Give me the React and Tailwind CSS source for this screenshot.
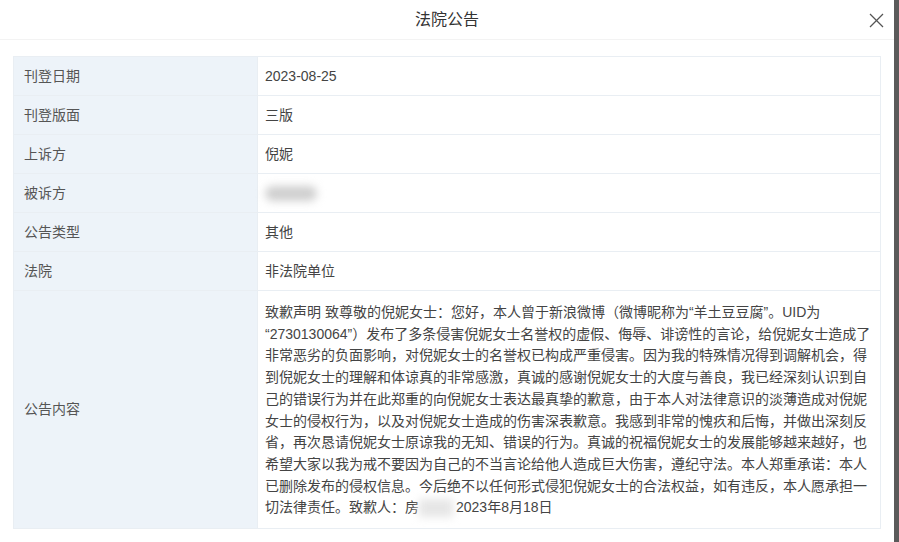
export default function App() {
  const rows = [
    { label: '刊登日期', value: '2023-08-25' },
    { label: '刊登版面', value: '三版' },
    { label: '上诉方', value: '倪妮' },
    { label: '被诉方', value: null },
    { label: '公告类型', value: '其他' },
    { label: '法院', value: '非法院单位' },
  ];

  const lines = [
    '致歉声明 致尊敬的倪妮女士：您好，本人曾于新浪微博（微博昵称为“羊土豆豆腐”。UID为',
    '“2730130064”）发布了多条侵害倪妮女士名誉权的虚假、侮辱、诽谤性的言论，给倪妮女士造成了',
    '非常恶劣的负面影响，对倪妮女士的名誉权已构成严重侵害。因为我的特殊情况得到调解机会，得',
    '到倪妮女士的理解和体谅真的非常感激，真诚的感谢倪妮女士的大度与善良，我已经深刻认识到自',
    '己的错误行为并在此郑重的向倪妮女士表达最真挚的歉意，由于本人对法律意识的淡薄造成对倪妮',
    '女士的侵权行为，以及对倪妮女士造成的伤害深表歉意。我感到非常的愧疚和后悔，并做出深刻反',
    '省，再次恳请倪妮女士原谅我的无知、错误的行为。真诚的祝福倪妮女士的发展能够越来越好，也',
    '希望大家以我为戒不要因为自己的不当言论给他人造成巨大伤害，遵纪守法。本人郑重承诺：本人',
    '已删除发布的侵权信息。今后绝不以任何形式侵犯倪妮女士的合法权益，如有违反，本人愿承担一',
  ];

  return (
    <div
      className="w-[899px] h-[542px] flex bg-white overflow-hidden"
      style={{ fontFamily: '"Liberation Sans", "Noto Sans CJK SC", sans-serif' }}
    >
      <div className="w-[894px] flex flex-col bg-white">
        {/* Header */}
        <div className="relative h-[40px] flex items-center justify-center border-b border-[#f3f3f3]">
          <span className="text-[16px] text-[#333]">法院公告</span>
          <button className="absolute right-[10px] top-[12px] w-[16px] h-[16px] flex items-center justify-center">
            <svg width="15" height="15" viewBox="0 0 15 15">
              <line x1="1" y1="1" x2="14" y2="14" stroke="#555" strokeWidth="1.3" />
              <line x1="14" y1="1" x2="1" y2="14" stroke="#555" strokeWidth="1.3" />
            </svg>
          </button>
        </div>

        {/* Body */}
        <div className="px-[13px] pt-[16px]">
          <div className="border border-[#e9eef3] text-[14px]">
            {rows.map((r) => (
              <div key={r.label} className="flex h-[39px] border-b border-[#e9eef3]">
                <div className="w-[243px] shrink-0 bg-[#edf3f9] flex items-center pl-[10px] text-[#555]">
                  {r.label}
                </div>
                <div className="flex-1 flex items-center pl-[7px] text-[#444] border-l border-[#e9eef3]">
                  {r.value ?? (
                    <span className="inline-block w-[52px] h-[15px] rounded-full bg-[#cfcfcf] blur-[4px]" />
                  )}
                </div>
              </div>
            ))}
            <div className="flex h-[237px]">
              <div className="w-[243px] shrink-0 bg-[#edf3f9] flex items-center pl-[10px] text-[#555]">
                公告内容
              </div>
              <div className="flex-1 pl-[7px] pt-[11px] text-[#444] leading-[21.7px] border-l border-[#e9eef3]">
                {lines.map((l, i) => (
                  <div key={i} className="whitespace-nowrap">
                    {l}
                  </div>
                ))}
                <div className="whitespace-nowrap flex items-center">
                  <span>切法律责任。致歉人：房</span>
                  <span className="inline-block w-[34px] h-[18px] bg-[#e6e6e6] blur-[4px]" />
                  <span className="ml-[3px]">2023年8月18日</span>
                </div>
              </div>
            </div>
          </div>
        </div>
      </div>
      <div className="flex-1 bg-[#5a5a5a]" />
    </div>
  );
}
